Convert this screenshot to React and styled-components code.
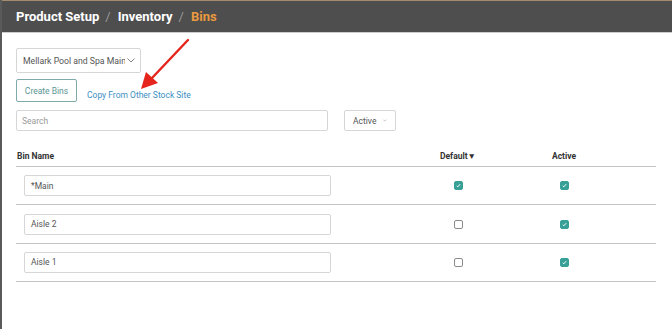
import React from 'react'
import styled, { createGlobalStyle } from 'styled-components'

const GlobalStyle = createGlobalStyle`
  html, body {
    margin: 0;
    padding: 0;
    background: #fff;
    font-family: Roboto, 'Liberation Sans', sans-serif;
  }
`

const Page = styled.div`
  position: relative;
  width: 672px;
  height: 329px;
  overflow: hidden;
  box-sizing: border-box;
  border-left: 2px solid #5a5a5a;
`

const Header = styled.header`
  height: 33px;
  box-sizing: border-box;
  background: #4e4e4e;
  border-top: 1px solid #a48a6e;
  border-bottom: 1px solid #cdcdcd;
  display: flex;
  align-items: center;
  padding-left: 16px;
  margin-left: -2px;
  font-size: 13px;
  font-weight: 700;
  color: #fff;
`

const Crumb = styled.span`
  color: ${({ current }) => (current ? '#eb9a3e' : '#fff')};
`

const Slash = styled.span`
  color: #9a9a9a;
  font-weight: 400;
  margin: 0 7px 0 6px;
`

const Content = styled.main`
  padding: 15px 16px 0 14px;
`

const SiteSelect = styled.div`
  width: 125px;
  height: 25px;
  box-sizing: border-box;
  border: 1px solid #d6d6d6;
  border-radius: 2px;
  display: flex;
  align-items: center;
  padding: 0 5px 0 6px;
  gap: 2px;
  font-size: 8.7px;
  color: #555;
  white-space: nowrap;
  overflow: hidden;
`

const Clip = styled.span`
  overflow: hidden;
  flex: 1;
`

const Chevron = () => (
  <svg width="8" height="5" viewBox="0 0 8 5">
    <path d="M0.5 0.5 L4 4 L7.5 0.5" fill="none" stroke="#777" strokeWidth="0.9" />
  </svg>
)

const ActionRow = styled.div`
  display: flex;
  align-items: flex-end;
  gap: 10px;
  margin-top: 6px;
`

const OutlineButton = styled.button`
  width: 61px;
  height: 23px;
  box-sizing: border-box;
  background: #fff;
  border: 1px solid #7eaaa8;
  border-radius: 2px;
  color: #5b9593;
  font-family: inherit;
  font-size: 8.5px;
  padding: 0;
`

const TextLink = styled.a`
  color: #3d8fc2;
  font-size: 8.5px;
  margin-bottom: 2px;
  text-decoration: none;
`

const FilterRow = styled.div`
  display: flex;
  gap: 16px;
  margin-top: 8px;
`

const SearchBox = styled.div`
  width: 312px;
  height: 21px;
  box-sizing: border-box;
  border: 1px solid #d6d6d6;
  border-radius: 2px;
  display: flex;
  align-items: center;
  padding: 0 5px;
  font-size: 8.5px;
  color: #9a9a9a;
`

const StatusSelect = styled(SiteSelect)`
  width: 52px;
  height: 21px;
  gap: 7px;
  padding: 0 8px;
  font-size: 8.5px;
`

const Table = styled.div`
  margin-top: 14px;
`

const Row = styled.div`
  display: grid;
  grid-template-columns: 1fr 106px 106px 39px;
  align-items: center;
  height: ${({ head }) => (head ? '22px' : '38.4px')};
  border-bottom: 1.5px solid #c4c4c4;
  box-sizing: border-box;
`

const HeadCell = styled.div`
  font-size: 8.5px;
  font-weight: 700;
  color: #333;
  text-align: ${({ center }) => (center ? 'center' : 'left')};
  padding-left: ${({ center }) => (center ? '0' : '1px')};
`

const Cell = styled.div`
  display: flex;
  justify-content: ${({ center }) => (center ? 'center' : 'flex-start')};
  padding-left: ${({ center }) => (center ? '0' : '8px')};
`

const NameInput = styled.div`
  width: 307px;
  height: 21px;
  box-sizing: border-box;
  border: 1px solid #d6d6d6;
  border-radius: 2px;
  display: flex;
  align-items: center;
  padding: 0 6px;
  font-size: 8.5px;
  color: #555;
`

const Box = styled.span`
  width: 9px;
  height: 9px;
  box-sizing: border-box;
  border-radius: 2px;
  display: flex;
  align-items: center;
  justify-content: center;
  background: ${({ checked }) => (checked ? '#38a097' : '#fff')};
  border: 1px solid ${({ checked }) => (checked ? '#38a097' : '#8a8a8a')};
`

const Check = ({ checked }) => (
  <Box checked={checked}>
    {checked && (
      <svg width="5" height="5" viewBox="0 0 5 5">
        <path d="M0.8 2.8 L1.8 3.8 L4.2 1.2" fill="none" stroke="#fff" strokeWidth="1" />
      </svg>
    )}
  </Box>
)

const Arrow = styled.svg`
  position: absolute;
  left: 0;
  top: 0;
  pointer-events: none;
`

const bins = [
  { name: '*Main', isDefault: true, active: true },
  { name: 'Aisle 2', isDefault: false, active: true },
  { name: 'Aisle 1', isDefault: false, active: true },
]

export default function App() {
  return (
    <Page>
      <GlobalStyle />
      <Header>
        <Crumb>Product Setup</Crumb>
        <Slash>/</Slash>
        <Crumb>Inventory</Crumb>
        <Slash>/</Slash>
        <Crumb current>Bins</Crumb>
      </Header>
      <Content>
        <SiteSelect>
          <Clip>Mellark Pool and Spa Main Warehouse</Clip>
          <Chevron />
        </SiteSelect>
        <ActionRow>
          <OutlineButton>Create Bins</OutlineButton>
          <TextLink>Copy From Other Stock Site</TextLink>
        </ActionRow>
        <FilterRow>
          <SearchBox>Search</SearchBox>
          <StatusSelect>
            <span>Active</span>
            <Chevron />
          </StatusSelect>
        </FilterRow>
        <Table>
          <Row head>
            <HeadCell>Bin Name</HeadCell>
            <HeadCell center>Default▼</HeadCell>
            <HeadCell center>Active</HeadCell>
            <div />
          </Row>
          {bins.map(b => (
            <Row key={b.name}>
              <Cell>
                <NameInput>{b.name}</NameInput>
              </Cell>
              <Cell center>
                <Check checked={b.isDefault} />
              </Cell>
              <Cell center>
                <Check checked={b.active} />
              </Cell>
              <div />
            </Row>
          ))}
        </Table>
      </Content>
      <Arrow width="672" height="329" viewBox="0 0 672 329">
        <line x1="186" y1="40" x2="150" y2="78" stroke="#e5251c" strokeWidth="2.4" strokeLinecap="round" />
        <polygon points="139,89 144,72 156,83" fill="#e5251c" />
      </Arrow>
    </Page>
  )
}
